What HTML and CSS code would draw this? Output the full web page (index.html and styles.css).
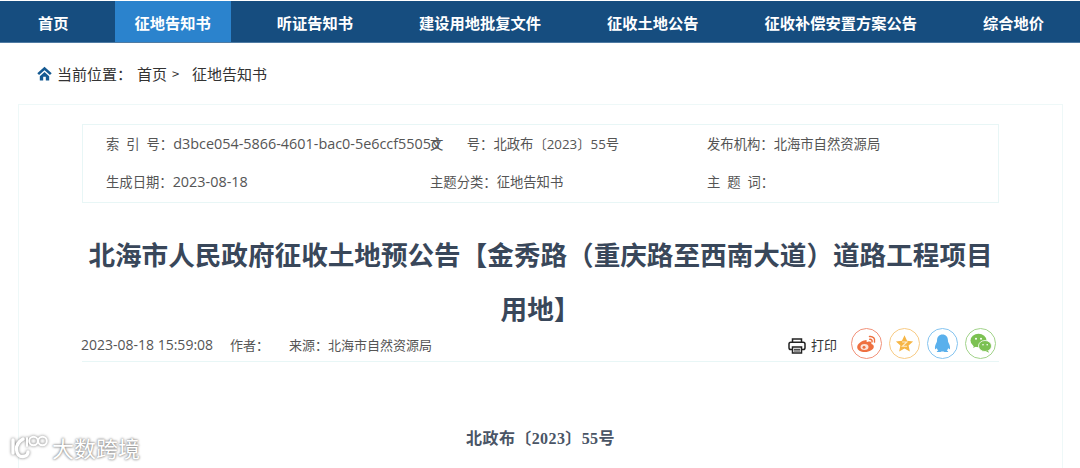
FILE: index.html
```html
<!DOCTYPE html>
<html lang="zh-CN">
<head>
<meta charset="utf-8">
<title>征地告知书</title>
<link rel="stylesheet" href="styles.css">
</head>
<body>
<nav class="nav">
  <a class="nav-item">首页</a>
  <a class="nav-item active">征地告知书</a>
  <a class="nav-item">听证告知书</a>
  <a class="nav-item">建设用地批复文件</a>
  <a class="nav-item">征收土地公告</a>
  <a class="nav-item">征收补偿安置方案公告</a>
  <a class="nav-item">综合地价</a>
</nav>
<div class="crumb">
  <svg class="home" viewBox="0 0 16 16"><path d="M8 .8 L0.3 7.800 L2.200 9.700 L8 4.500 L13.800 9.700 L15.700 7.800 Z M8 6.400 L3 10.800 V15.500 H6.600 V11.400 H9.400 V15.500 H13 V10.800 Z" fill="#155a92"/></svg>
  <span class="crumb-label">当前位置：</span>
  <span class="crumb-link">首页</span>
  <span class="crumb-sep">&gt;</span>
  <span>征地告知书</span>
</div>
<main class="card">
  <section class="info">
    <div class="cell">索&nbsp;&nbsp;引&nbsp;&nbsp;号：<span class="latin">d3bce054-5866-4601-bac0-5e6ccf5505d</span></div>
    <div class="cell">文&emsp;&ensp;&nbsp;号：北政布〔2023〕55号</div>
    <div class="cell">发布机构：北海市自然资源局</div>
    <div class="cell">生成日期：<span class="latin">2023-08-18</span></div>
    <div class="cell">主题分类：征地告知书</div>
    <div class="cell">主&nbsp;&nbsp;题&nbsp;&nbsp;词：</div>
  </section>
  <h1 class="title">北海市人民政府征收土地预公告【金秀路（重庆路至西南大道）道路工程项目用地】</h1>
  <div class="meta">
    <span class="date">2023-08-18 15:59:08</span>
    <span class="author">作者：</span>
    <span>来源：北海市自然资源局</span>
    <span class="print">
      <svg class="print-icon" viewBox="0 0 18 16"><g fill="none" stroke="#222" stroke-width="1.500"><path d="M4.500 4V1h9v3"/><rect x="1" y="4.200" width="16" height="7.300" rx="1.800"/><rect x="4.500" y="9" width="9" height="6" fill="#fff"/></g><path d="M6 11.300h6M6 13h6" stroke="#222" stroke-width="1"/></svg>
      打印
    </span>
    <span class="shares">
      <span class="share weibo"><svg viewBox="0 0 24 24"><path d="M10.500 9.200c-4 .5-8.300 3.500-8.300 7 0 2.800 3.500 4.800 7.600 4.800 5 0 9-2.700 9-5.300 0-1.700-1.500-2.300-2.500-2.700.5-1.300.3-2.400-1.500-2.600-1.200-.1-2.600.5-3.200.7.300-1.300.2-2.300-1.100-1.900z" fill="#ee7040"/><ellipse cx="9.500" cy="16" rx="4" ry="3" fill="#fbe3d8"/><circle cx="9" cy="16.200" r="1.500" fill="#ee7040"/><path d="M14.500 5.500c3.500-.5 6 2.300 5 5.500M14.800 8.300c1.700-.2 2.700 1 2.200 2.500" fill="none" stroke="#ee7040" stroke-width="1.500" stroke-linecap="round"/></svg></span>
      <span class="share star"><svg viewBox="0 0 24 24"><path d="M12 2.500l2.900 6.300 6.900.8-5.100 4.600 1.400 6.800-6.100-3.400-6.100 3.400 1.400-6.800L2.200 9.600l6.900-.8z" fill="#f6b544"/><path d="M9.300 10.300h5.400l-5 4.800h5.200" fill="none" stroke="#fdeccb" stroke-width="1.300"/></svg></span>
      <span class="share qq"><svg viewBox="0 0 24 24"><path d="M12 2.500c-3.600 0-5.700 2.700-5.700 6.200 0 1-.1 1.500-.6 2.400-1.100 2-1.900 4.200-1.500 6.300.3 1 1 .5 1.800-.8.300 1.200.9 2.100 1.600 2.800-1 .4-1.700 1-1.500 1.500h3.900c.9-.6 3-.6 4 0h3.900c.2-.5-.5-1.100-1.500-1.500.7-.7 1.300-1.600 1.600-2.800.8 1.300 1.500 1.800 1.800.8.400-2.100-.4-4.300-1.500-6.300-.5-.9-.6-1.400-.6-2.400 0-3.500-2.100-6.200-5.700-6.200z" fill="#5ab0ec"/></svg></span>
      <span class="share wechat"><svg viewBox="0 0 24 24"><ellipse cx="9.500" cy="9.500" rx="8" ry="6.700" fill="#7cc152"/><path d="M5 14l-.8 3 3.300-1.700z" fill="#7cc152"/><ellipse cx="16" cy="15" rx="6.500" ry="5.500" fill="#7cc152" stroke="#fff" stroke-width=".8"/><path d="M19 19.500l1 2.200-3-1.400z" fill="#7cc152"/><circle cx="7" cy="7.800" r="1" fill="#fff"/><circle cx="12" cy="7.800" r="1" fill="#fff"/><circle cx="14" cy="13.800" r=".8" fill="#fff"/><circle cx="18.200" cy="13.800" r=".8" fill="#fff"/></svg></span>
    </span>
  </div>
  <p class="docno">北政布〔2023〕55号</p>
</main>
<div class="watermark">
  <svg class="wm-logo" viewBox="0 0 40 26"><g fill="none" stroke="#fff" stroke-linecap="round"><path d="M5 6v13" stroke-width="3.400"/><path d="M15 5C10 8 8.500 12 8.500 15c0 5 3 8 6.500 7.500 3-.4 5-2 5-4.500" stroke-width="3.400"/><path d="M19 4v8" stroke-width="2"/><circle cx="25.500" cy="7" r="4.300" stroke-width="2"/><circle cx="34.500" cy="7" r="4.300" stroke-width="2"/></g></svg>
  <span>大数跨境</span>
</div>
</body>
</html>
```
FILE: styles.css
```css
* { box-sizing: border-box; }
html, body { margin: 0; padding: 0; }
body {
  position: relative;
  height: 468px;
  padding-top: 1px;
  overflow: hidden;
  background: #fff;
  font-family: "Open Sans", "Noto Sans CJK SC", sans-serif;
  color: #555;
}
.nav {
  display: flex;
  gap: 26px;
  height: 42px;
  padding-left: 18px;
  background: #164d7f;
  border-bottom: 1px solid #4f7ba3;
}
.nav-item {
  padding: 0 20px;
  line-height: 42px;
  font-family: "Noto Sans CJK SC", sans-serif;
  font-size: 15.250px;
  font-weight: 700;
  color: #fff;
  white-space: nowrap;
}
.nav-item.active { background: #2b83cd; }
.crumb {
  display: flex;
  align-items: center;
  height: 61px;
  padding: 0 0 1px 37px;
  font-family: "Noto Sans CJK SC", sans-serif;
  font-size: 15px;
  color: #333;
}
.home { width: 15px; height: 15px; margin-right: 5px; }
.crumb-label { width: 80px; }
.crumb-link { margin-right: 5px; }
.crumb-sep { width: 20px; font-size: 13px; }
.card {
  margin: 0 17px 0 18px;
  height: 364px;
  padding: 19px 63px 0;
  border: 1px solid #eef8f8;
  border-bottom: 0;
}
.info {
  display: grid;
  grid-template-columns: 324px 277px 1fr;
  grid-auto-rows: 38px;
  height: 79px;
  padding-left: 23px;
  border: 1px solid #e8f6f6;
  font-size: 13.330px;
  line-height: 38px;
  color: #555;
}
.cell { white-space: nowrap; }
.latin { font-size: 14.400px; }
.title {
  margin: 24px 0 -8px;
  font-family: "Noto Sans CJK SC", sans-serif;
  font-size: 26.600px;
  font-weight: 700;
  line-height: 54px;
  text-align: center;
  color: #39475a;
}
.meta {
  display: flex;
  align-items: center;
  height: 35px;
  border-bottom: 1px solid #e8f6f6;
  font-size: 13px;
  color: #555;
}
.date { width: 149px; margin-left: -1px; font-size: 14px; }
.author { width: 59px; }
.print {
  display: flex;
  align-items: center;
  gap: 5px;
  margin-left: auto;
  margin-right: 14px;
  color: #333;
}
.print-icon { width: 18px; height: 16px; margin-top: 3px; }
.shares { display: flex; gap: 7px; margin-right: 3px; margin-top: -2px; }
.share {
  display: flex;
  align-items: center;
  justify-content: center;
  width: 31px;
  height: 31px;
  border: 1px solid;
  border-radius: 50%;
}
.share svg { width: 24px; height: 24px; }
.star svg { width: 21px; height: 21px; }
.qq svg { width: 23px; height: 23px; }
.weibo { border-color: #f2927a; }
.star { border-color: #f8cb85; }
.qq { border-color: #85c4f0; }
.wechat { border-color: #a2d38a; }
.docno {
  margin: 63px 0 0;
  font-family: "Liberation Serif", "Noto Sans CJK SC", serif;
  font-size: 16px;
  font-weight: 700;
  letter-spacing: .4px;
  text-align: center;
  color: #4a5566;
}
.watermark {
  position: absolute;
  left: 8px;
  top: 431px;
  display: flex;
  align-items: center;
  gap: 4px;
  font-family: "Noto Sans CJK SC", sans-serif;
  font-size: 22px;
  color: #fff;
  text-shadow: 0 0 3px #888, 0 0 2px #888;
}
.wm-logo { width: 40px; height: 26px; filter: drop-shadow(0 0 1.500px #777); }
```
